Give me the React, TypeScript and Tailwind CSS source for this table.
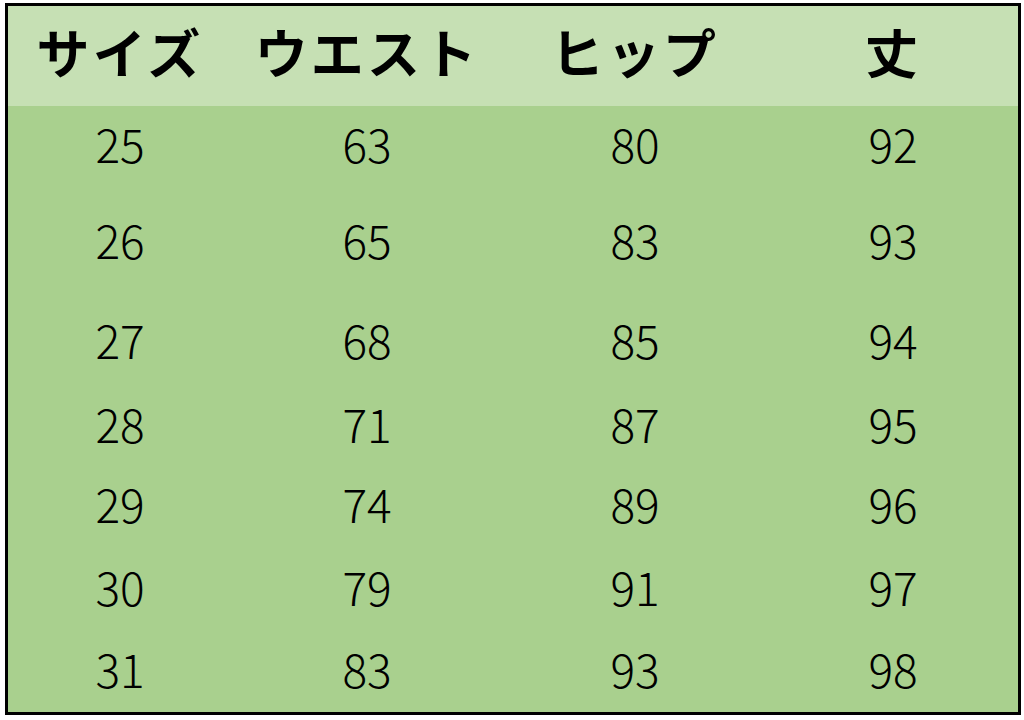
const columns = ["サイズ", "ウエスト", "ヒップ", "丈"];

const rows = [
    {h: "h-[82px]", cells: ["25", "63", "80", "92"]},
    {h: "h-[110px]", cells: ["26", "65", "83", "93"]},
    {h: "h-[90px]", cells: ["27", "68", "85", "94"]},
    {h: "h-[78px]", cells: ["28", "71", "87", "95"]},
    {h: "h-[82px]", cells: ["29", "74", "89", "96"]},
    {h: "h-[84px]", cells: ["30", "79", "91", "97"]},
    {h: "h-[80px]", cells: ["31", "83", "93", "98"]},
];

const colGrid = "grid grid-cols-[224px_270px_266px_250px]";

export default function App() {
    return (
        <div
            className="w-[1024px] h-[720px] bg-white overflow-hidden pt-[3px] pl-[5px]"
            style={{fontFamily: '"Noto Sans CJK JP", "Noto Sans", sans-serif'}}
        >
            <div className="w-[1016px] h-[712px] border-[3px] border-black bg-[#a9d08e] flex flex-col">
                <div className={`${colGrid} h-[100px] pb-[10px] bg-[#c6e0b4] items-center`}>
                    {columns.map((c) => (
                        <div key={c} className="text-center text-[53px] font-bold text-black leading-none tracking-[0.06em]">
                            {c}
                        </div>
                    ))}
                </div>
                {rows.map((r) => (
                    <div key={r.cells[0]} className={`${colGrid} ${r.h} pb-[8px] items-center`}>
                        {r.cells.map((v, i) => (
                            <div key={i} className="text-center text-[46px] font-light text-black leading-none">
                                {v}
                            </div>
                        ))}
                    </div>
                ))}
            </div>
        </div>
    );
}
